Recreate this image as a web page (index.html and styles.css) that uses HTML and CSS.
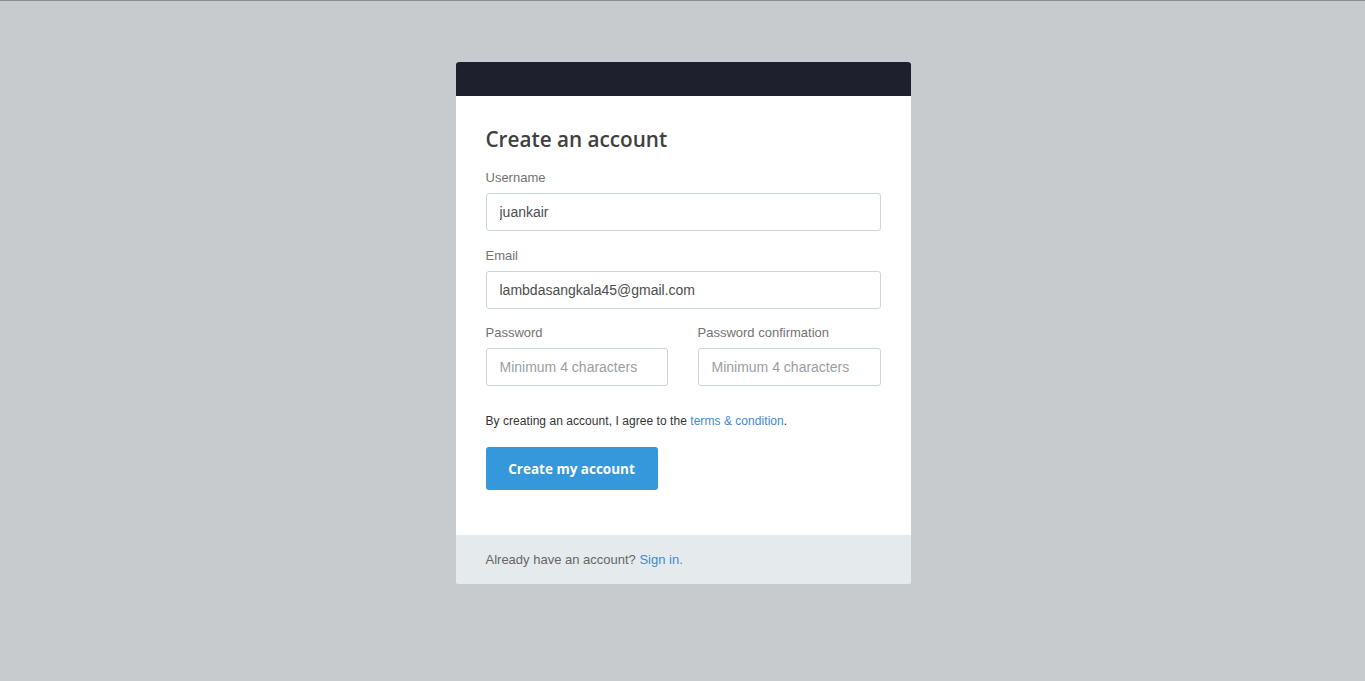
FILE: index.html
```html
<!DOCTYPE html>
<html>
<head>
<meta charset="utf-8">
<link rel="stylesheet" href="styles.css">
</head>
<body>
<div class="topline"></div>
<main class="page">
  <section class="card">
    <div class="card-head"></div>
    <form class="card-body">
      <h1 class="title">Create an account</h1>
      <div class="field">
        <label class="label">Username</label>
        <input class="input" type="text" value="juankair">
      </div>
      <div class="field">
        <label class="label">Email</label>
        <input class="input" type="text" value="lambdasangkala45@gmail.com">
      </div>
      <div class="row">
        <div class="field">
          <label class="label">Password</label>
          <input class="input" type="password" placeholder="Minimum 4 characters">
        </div>
        <div class="field">
          <label class="label">Password confirmation</label>
          <input class="input" type="password" placeholder="Minimum 4 characters">
        </div>
      </div>
      <p class="terms">By creating an account, I agree to the <a class="link" href="#">terms &amp; condition</a>.</p>
      <button class="btn" type="button">Create my account</button>
    </form>
    <div class="card-foot">Already have an account? <a class="link" href="#">Sign in.</a></div>
  </section>
</main>
</body>
</html>
```
FILE: styles.css
```css
* { box-sizing: border-box; }
html, body { margin: 0; padding: 0; }
body {
  background: #c7cbce;
  font-family: "Liberation Sans", Arial, sans-serif;
  height: 681px;
  overflow: hidden;
}
.topline { height: 1px; background: #8a8c8e; }
.page {
  display: flex;
  justify-content: center;
  padding-top: 61px;
}
.card {
  width: 455px;
  margin-left: 1px;
  border-radius: 3px;
  overflow: hidden;
  background: #fff;
}
.card-head { height: 34px; background: #1e202d; }
.card-body {
  display: flex;
  flex-direction: column;
  padding: 31px 30px 45px;
  margin: 0;
}
.title {
  margin: 0;
  font-family: "Open Sans", sans-serif;
  font-weight: 600;
  font-size: 20.7px;
  line-height: 24px;
  color: #404040;
}
.field { display: flex; flex-direction: column; margin-top: 17px; }
.title + .field { margin-top: 19px; }
.label {
  font-size: 13px;
  line-height: 16px;
  color: #737373;
  margin-bottom: 7px;
}
.input {
  height: 38px;
  border: 1px solid #cbd5de;
  border-radius: 3px;
  padding: 0 13px;
  font-family: "Liberation Sans", Arial, sans-serif;
  font-size: 14px;
  color: #4d4d4d;
  background: #fff;
  outline: none;
  width: 100%;
}
.input::placeholder { color: #9a9ea3; }
.row { display: grid; grid-template-columns: 182px 183px; column-gap: 30px; }
.row .field { margin-top: 16px; }
.terms {
  margin: 27px 0 0;
  font-size: 12px;
  line-height: 16px;
  color: #333;
  letter-spacing: 0.05px;
}
.link { color: #3d8ad3; text-decoration: none; }
.btn {
  align-self: flex-start;
  margin-top: 18px;
  width: 172px;
  height: 43px;
  border: 0;
  border-radius: 3px;
  background: #3498db;
  color: #fff;
  font-family: "Open Sans", sans-serif;
  font-weight: 700;
  font-size: 13.5px;
  padding: 0;
}
.card-foot {
  height: 49px;
  line-height: 49px;
  padding: 0 30px;
  background: #e5eaec;
  font-size: 13px;
  color: #666;
}
```
